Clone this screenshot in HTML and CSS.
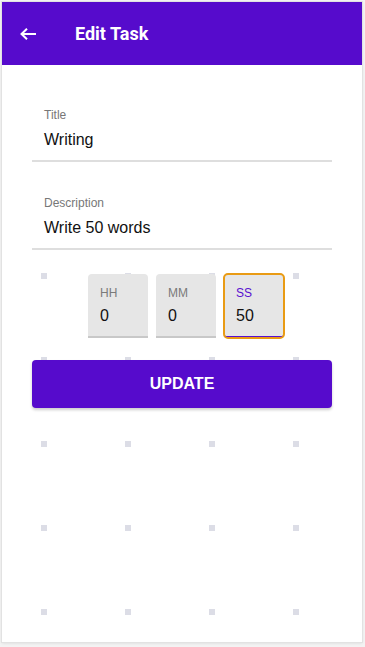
FILE: index.html
```html
<!DOCTYPE html>
<html>
<head>
<meta charset="utf-8">
<link rel="stylesheet" href="styles.css">
</head>
<body>
<div class="card">
  <header class="appbar">
    <svg class="back" width="16" height="12" viewBox="0 0 16 12"><path d="M16 6H1.5M7 0.7L1.5 6 7 11.3" fill="none" stroke="#fff" stroke-width="2"/></svg>
    <h1 class="title">Edit Task</h1>
  </header>
  <div class="form">
    <div class="field">
      <div class="label">Title</div>
      <div class="value">Writing</div>
    </div>
    <div class="field field-2">
      <div class="label">Description</div>
      <div class="value">Write 50 words</div>
    </div>
  </div>
  <div class="panel">
    <div class="timer">
      <div class="tbox"><div class="tlabel">HH</div><div class="tvalue">0</div></div>
      <div class="tbox"><div class="tlabel">MM</div><div class="tvalue">0</div></div>
      <div class="tbox focus"><div class="tlabel">SS</div><div class="tvalue">50</div></div>
    </div>
    <button class="update">UPDATE</button>
  </div>
</div>
</body>
</html>
```
FILE: styles.css
```css
* { box-sizing: border-box; }
html, body { margin: 0; padding: 0; }
body {
  background: #f3f3f3;
  font-family: "Liberation Sans", Arial, sans-serif;
  width: 365px;
  height: 647px;
  overflow: hidden;
}
.card {
  margin: 2px;
  width: 360px;
  height: 640px;
  background: #fff;
  box-shadow: 0 0 0 1px #e2e2e2, 0 1px 3px rgba(0,0,0,0.12);
  display: flex;
  flex-direction: column;
}
.appbar {
  height: 63px;
  background: #560bcc;
  display: flex;
  align-items: center;
  padding-left: 18px;
  flex-shrink: 0;
}
.back { display: block; }
.title {
  margin: 0 0 0 39px;
  color: #fff;
  font-family: Roboto, sans-serif;
  font-weight: 700;
  font-size: 18px;
  line-height: 22px;
}
.form {
  padding: 43px 30px 0;
}
.field {
  padding: 0 12px 10px;
  border-bottom: 2px solid #dedede;
}
.field-2 { margin-top: 34px; }
.label {
  font-size: 12px;
  line-height: 14px;
  color: #777;
}
.value {
  margin-top: 8px;
  font-size: 16px;
  line-height: 20px;
  color: #111;
}
.panel {
  flex: 1;
  padding: 24px 30px 0;
  background-image: conic-gradient(from 270deg at 6px 6px, #dcdde6 25%, transparent 0);
  background-size: 84px 84px;
  background-position: 39px 23px;
}
.timer {
  display: flex;
  justify-content: center;
  gap: 8px;
  padding-left: 8px;
}
.tbox {
  width: 60px;
  height: 64px;
  background: #e6e6e6;
  border-radius: 4px 4px 0 0;
  border-bottom: 2px solid #c8c8c8;
  padding: 12px 12px 0;
}
.tbox.focus {
  border-bottom-color: #5a0fd0;
  outline: 2px solid #e99b14;
  outline-offset: -1px;
  border-radius: 4px;
}
.tlabel {
  font-size: 12px;
  line-height: 14px;
  color: #7a7a7a;
}
.focus .tlabel { color: #5a0fd0; }
.tvalue {
  margin-top: 6px;
  font-size: 16px;
  line-height: 20px;
  color: #111;
}
.update {
  display: block;
  width: 300px;
  height: 48px;
  margin-top: 22px;
  border: 0;
  border-radius: 4px;
  background: #560bcc;
  color: #fff;
  font-family: "Liberation Sans", Arial, sans-serif;
  font-weight: 700;
  font-size: 16px;
  box-shadow: 0 2px 3px rgba(0,0,0,0.2);
}
```
